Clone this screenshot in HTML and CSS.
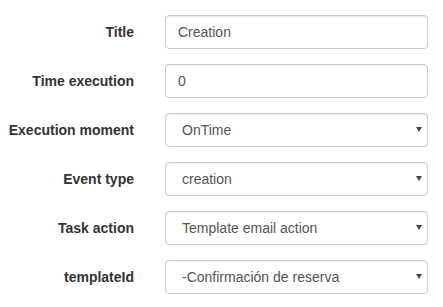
FILE: index.html
```html
<!DOCTYPE html>
<html lang="en">
<head>
  <meta charset="UTF-8" />
  <title>Task form</title>
  <link rel="stylesheet" href="styles.css">
</head>
<body>
  <form class="task-form">
    <div class="form-row">
      <label for="title">Title</label>
      <input type="text" id="title" value="Creation" />
    </div>

    <div class="form-row">
      <label for="time">Time execution</label>
      <input type="text" id="time" value="0" />
    </div>

    <div class="form-row">
      <label for="moment">Execution moment</label>
      <div class="select-wrap">
        <select id="moment">
          <option>OnTime</option>
        </select>
      </div>
    </div>

    <div class="form-row">
      <label for="event">Event type</label>
      <div class="select-wrap">
        <select id="event">
          <option>creation</option>
        </select>
      </div>
    </div>

    <div class="form-row">
      <label for="action">Task action</label>
      <div class="select-wrap">
        <select id="action">
          <option>Template email action</option>
        </select>
      </div>
    </div>

    <div class="form-row">
      <label for="template">templateId</label>
      <div class="select-wrap">
        <select id="template">
          <option>-Confirmación de reserva</option>
        </select>
      </div>
    </div>
  </form>
</body>
</html>
```

FILE: styles.css
```css
body {
  margin: 0;
  background: #fff;
  font-family: "Liberation Sans", Arial, sans-serif;
  font-size: 14px;
  color: #333;
}

.task-form {
  padding-top: 15px;
  display: flex;
  flex-direction: column;
  gap: 15px;
}

.form-row {
  display: grid;
  grid-template-columns: 134px 263px;
  column-gap: 31px;
  align-items: center;
  height: 34px;
}

.form-row label {
  text-align: right;
  font-weight: bold;
  color: #333;
}

.form-row input,
.form-row select {
  box-sizing: border-box;
  width: 263px;
  height: 34px;
  margin: 0;
  padding: 6px 12px;
  font-family: inherit;
  font-size: 14px;
  color: #555;
  background: #fff;
  border: 1px solid #ccc;
  border-radius: 4px;
  box-shadow: inset 0 1px 1px rgba(0, 0, 0, 0.075);
  outline: none;
}

.form-row select {
  appearance: none;
  -webkit-appearance: none;
  padding-left: 16px;
}

.select-wrap {
  position: relative;
  width: 263px;
  height: 34px;
}

.select-wrap::after {
  content: "";
  position: absolute;
  right: 6px;
  top: 14px;
  border-left: 3px solid transparent;
  border-right: 3px solid transparent;
  border-top: 5px solid #444;
  pointer-events: none;
}
```
